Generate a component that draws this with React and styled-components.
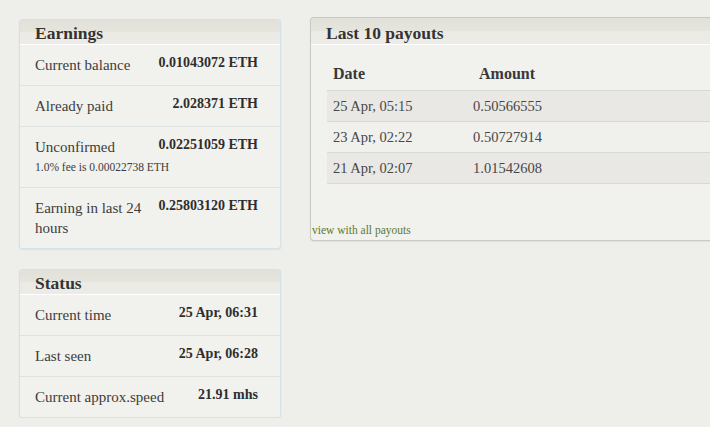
import * as React from "react";
import styled, { createGlobalStyle } from "styled-components";

const Global = createGlobalStyle`
  html, body {
    margin: 0;
    padding: 0;
    overflow: hidden;
    background: #eeeeeb;
  }
  body {
    font-family: "Liberation Serif", Georgia, serif;
    color: #3b3b3b;
  }
`;

const Page = styled.div`
  display: flex;
  align-items: flex-start;
  gap: 29px;
  padding: 17px 0 0 19px;
`;

const Column = styled.div`
  display: flex;
  flex-direction: column;
  gap: 20px;
  padding-top: 2px;
  width: 262px;
  flex-shrink: 0;
`;

const Card = styled.div`
  background: #f1f1ed;
  border: 1px solid #d2e3e7;
  border-radius: 3px;
  box-shadow: 0 1px 2px rgba(0, 0, 0, 0.06);
  overflow: hidden;
`;

// the payouts panel runs on past the right edge of the window
const WideCard = styled(Card)`
  flex: 1;
  min-width: 0;
  border-color: #c9c9c4;
  border-right: none;
  border-radius: 4px 0 0 4px;
`;

const Header = styled.div`
  height: ${p => p.$height || 25}px;
  box-sizing: border-box;
  padding: ${p => p.$top || 2}px 0 0 15px;
  line-height: 22px;
  font-size: 17.5px;
  font-weight: bold;
  color: #333;
  background: linear-gradient(#e2e1d9 0%, #e5e4dd 48%, #ebeae5 52%, #ecebe6 100%);
  border-bottom: 1px solid #ffffff;
`;

const Row = styled.div`
  display: grid;
  grid-template-columns: 1fr auto;
  column-gap: 10px;
  align-items: start;
  padding: 10px 22px 10px 15px;
  & + & {
    border-top: 1px solid #dde3e3;
  }
`;

const Label = styled.div`
  font-size: 15px;
  line-height: 20px;
  color: #3d3d3d;
`;

const Note = styled.div`
  grid-column: 1 / -1;
  font-size: 11.5px;
  line-height: 20px;
  color: #3d3d3d;
`;

const Value = styled.div`
  white-space: nowrap;
  font-size: 14px;
  font-weight: bold;
  line-height: 16px;
  color: #2e2e2e;
`;

const Table = styled.table`
  border-collapse: collapse;
  margin: 13px 0 0 16px;
  width: calc(100% - 16px);
  font-size: 14.5px;
`;

const Th = styled.th`
  text-align: left;
  font-size: 16px;
  font-weight: bold;
  color: #383838;
  height: 32px;
  padding: 0 0 0 ${p => p.$pad || 6}px;
  width: ${p => p.$width || "auto"};
  border-bottom: 1px solid #d8d8d3;
`;

const Tr = styled.tr`
  background: ${p => (p.$odd ? "#e9e8e4" : "#f0f0ec")};
  & + & td {
    border-top: 1px solid #ffffff;
  }
`;

const Td = styled.td`
  height: 30px;
  padding: 0 0 0 6px;
  color: #474747;
  border-bottom: 1px solid #d9d9d4;
`;

const Link = styled.a`
  display: block;
  margin-top: 39px;
  padding: 0 0 3px 1px;
  font-size: 11.5px;
  line-height: 14px;
  color: #5b7a2c;
  text-decoration: none;
`;

const earnings = [
  { label: "Current balance", value: "0.01043072 ETH" },
  { label: "Already paid", value: "2.028371 ETH" },
  { label: "Unconfirmed", value: "0.02251059 ETH", note: "1.0% fee is 0.00022738 ETH" },
  { label: "Earning in last 24 hours", value: "0.25803120 ETH" },
];

const status = [
  { label: "Current time", value: "25 Apr, 06:31" },
  { label: "Last seen", value: "25 Apr, 06:28" },
  { label: "Current approx.speed", value: "21.91 mhs" },
];

const payouts = [
  ["25 Apr, 05:15", "0.50566555"],
  ["23 Apr, 02:22", "0.50727914"],
  ["21 Apr, 02:07", "1.01542608"],
];

const InfoCard = ({ title, rows }) => (
  <Card>
    <Header>{title}</Header>
    {rows.map(r => (
      <Row key={r.label}>
        <Label>{r.label}</Label>
        <Value>{r.value}</Value>
        {r.note && <Note>{r.note}</Note>}
      </Row>
    ))}
  </Card>
);

const App = () => (
  <>
    <Global />
    <Page>
      <Column>
        <InfoCard title="Earnings" rows={earnings} />
        <InfoCard title="Status" rows={status} />
      </Column>
      <WideCard>
        <Header $height={27} $top={4}>Last 10 payouts</Header>
        <Table>
          <thead>
            <tr>
              <Th $width="134px">Date</Th>
              <Th $pad={12}>Amount</Th>
            </tr>
          </thead>
          <tbody>
            {payouts.map(([date, amount], i) => (
              <Tr key={date} $odd={i % 2 === 0}>
                <Td>{date}</Td>
                <Td>{amount}</Td>
              </Tr>
            ))}
          </tbody>
        </Table>
        <Link href="#">view with all payouts</Link>
      </WideCard>
    </Page>
  </>
);

export default App;
